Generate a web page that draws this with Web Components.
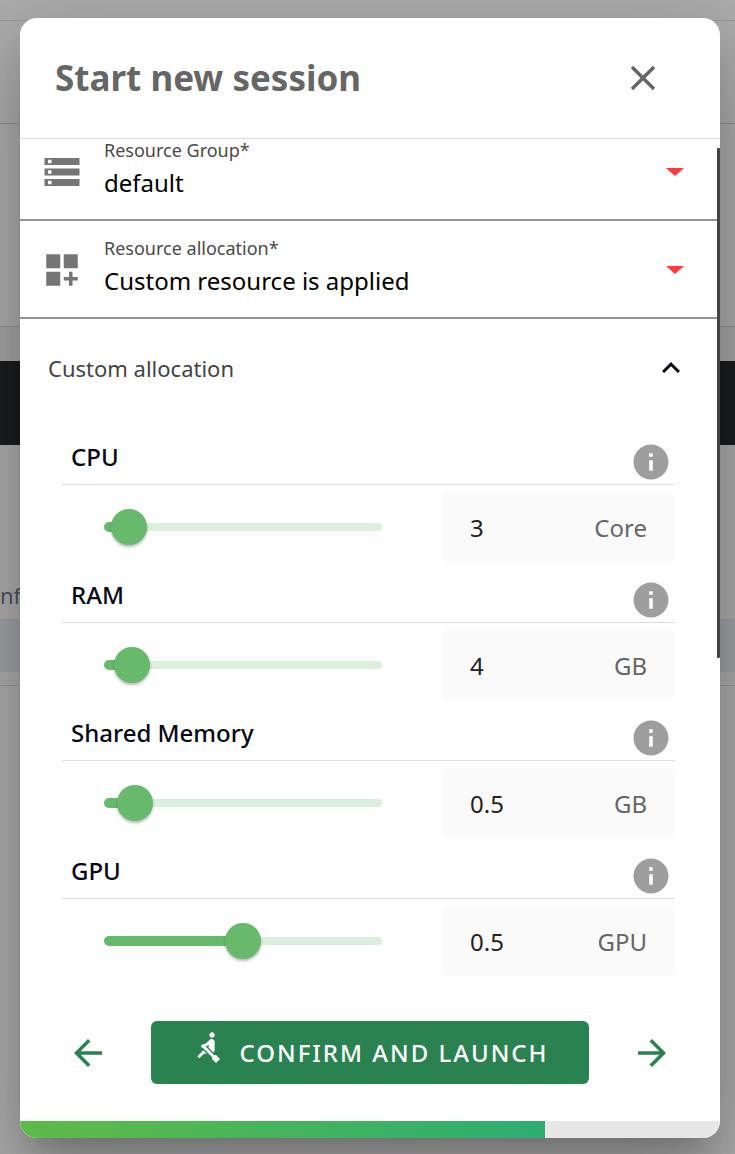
<!DOCTYPE html>
<html lang="en">
<head>
<meta charset="utf-8">
<meta name="viewport" content="width=device-width, initial-scale=1">
<title>Start new session</title>
<style>
  body { margin: 0; font-family: "Noto Sans", "Open Sans", sans-serif; background: #adadad; }
</style>
</head>
<body>
<session-page></session-page>

<script>
const define = (name, html, setup) => {
  const template = document.createElement('template');
  template.innerHTML = html;
  customElements.define(name, class extends HTMLElement {
    constructor() {
      super();
      this.attachShadow({ mode: 'open' }).append(template.content.cloneNode(true));
    }
    connectedCallback() { if (setup) setup(this, this.shadowRoot); }
  });
};

const icons = {
  close: '<path d="M19 6.41 17.59 5 12 10.59 6.41 5 5 6.41 10.59 12 5 17.59 6.41 19 12 13.41 17.59 19 19 17.59 13.41 12z"/>',
  storage: '<path d="M2 20h20v-4H2v4zm2-3h2v2H4v-2zM2 4v4h20V4H2zm4 3H4V5h2v2zm-4 7h20v-4H2v4zm2-3h2v2H4v-2z"/>',
  custom: '<path d="M3 3h8v8H3zM13 3h8v8h-8zM3 13h8v8H3zM18 13h-2v3h-3v2h3v3h2v-3h3v-2h-3z"/>',
  up: '<path d="M12 8l-6 6 1.41 1.41L12 10.83l4.59 4.58L18 14z"/>',
  info: '<path d="M12 2C6.48 2 2 6.48 2 12s4.48 10 10 10 10-4.48 10-10S17.52 2 12 2zm1 15h-2v-6h2v6zm0-8h-2V7h2v2z"/>',
  back: '<path d="M20 11H7.83l5.59-5.59L12 4l-8 8 8 8 1.41-1.41L7.83 13H20v-2z"/>',
  forward: '<path d="M12 4l-1.41 1.41L16.17 11H4v2h12.17l-5.58 5.59L12 20l8-8z"/>',
  rowing: '<path d="M8.5 14.5L4 19l1.5 1.5L9 17h2l-2.500-2.500zM15 1c-1.100 0-2 .9-2 2s.9 2 2 2 2-.9 2-2-.9-2-2-2zm6 20.010L18 24l-2.990-3.010V19.500l-7.100-7.090c-.31.050-.61.070-.91.070v-2.160c1.660.030 3.610-.870 4.670-2.040l1.400-1.550c.190-.210.430-.380.690-.5.290-.140.620-.23.960-.23h.030C15.990 6.010 17 7.020 17 8.260v5.750c0 .84-.35 1.610-.92 2.160l-3.580-3.580v-2.270c-.63.520-1.430 1.020-2.290 1.390L16.500 18H18l3 3.010z"/>'
};

define('ui-icon', `
  <style>
    :host { display: block; flex: none; width: 42px; height: 42px; }
    svg { display: block; width: 100%; height: 100%; fill: currentColor; }
  </style>
  <svg viewBox="0 0 24 24" aria-hidden="true"></svg>`,
  (el, root) => { root.querySelector('svg').innerHTML = icons[el.getAttribute('name')]; });

define('select-row', `
  <style>
    :host { display: block; border-bottom: 2px solid #939393; padding: 16px 0 14px; }
    :host([flush]) { padding-top: 0; }
    .field { display: grid; grid-template-columns: 84px 1fr 51px; grid-template-rows: 22px 44px; align-items: center; }
    .icon { grid-area: 1 / 1 / 3 / 2; margin-left: 21px; color: #757575; }
    label { grid-area: 1 / 2; font-size: 18px; line-height: 22px; color: #4a4a4a; }
    select { grid-area: 2 / 2 / 3 / 4; appearance: none; border: 0; padding: 0; margin: 0; width: 100%; height: 44px;
      background: none; font: 24px/44px "Noto Sans", sans-serif; color: #000; }
    .arrow { grid-area: 1 / 3 / 3 / 4; width: 18px; height: 8px; background: #ff3a3a; clip-path: polygon(0 0, 100% 0, 50% 100%); pointer-events: none; }
  </style>
  <div class="field">
    <div class="icon"></div>
    <label for="s"></label>
    <select id="s"><option></option></select>
    <span class="arrow"></span>
  </div>`,
  (el, root) => {
    const icon = document.createElement('ui-icon');
    icon.setAttribute('name', el.getAttribute('icon'));
    root.querySelector('.icon').replaceChildren(icon);
    root.querySelector('label').textContent = el.getAttribute('label');
    root.querySelector('option').textContent = el.getAttribute('value');
  });

define('resource-slider', `
  <style>
    :host { display: block; padding-bottom: 15px; }
    header { display: flex; justify-content: space-between; align-items: flex-start; height: 45px; padding: 0 6px 0 9px; border-bottom: 1px solid #dcdcdc; }
    h3 { margin: 0; font-size: 24px; line-height: 36px; font-weight: 500; color: #040716; }
    .info { border: 0; padding: 0; margin: 2px 0 0; width: 36px; background: none; color: #9e9e9e; display: flex; justify-content: center; }
    .body { display: grid; grid-template-columns: 1fr 233px; column-gap: 60px; padding: 7px 0 0 42px; align-items: center; }
    .slider { display: grid; align-items: center; }
    .track, .fill, input[type=range] { grid-area: 1 / 1; }
    .track { height: 8px; border-radius: 4px; background: #daefdc; }
    .fill { height: 10px; border-radius: 5px; background: #67ba6c; width: var(--at); }
    input[type=range] { appearance: none; margin: 0 -18px; height: 36px; background: none; }
    input[type=range]::-webkit-slider-thumb { appearance: none; width: 36px; height: 36px; border-radius: 50%; background: #67ba6c;
      box-shadow: 0 2px 3px rgba(0,0,0,.28); }
    .box { display: flex; align-items: center; height: 70px; padding: 0 28px; border-radius: 6px; background: #fafafa; box-sizing: border-box; font-size: 24px; color: #666; }
    .box input { flex: 1; min-width: 0; border: 0; padding: 0; background: none; font: inherit; color: #222; }
  </style>
  <header><h3></h3><button class="info" type="button"><ui-icon name="info"></ui-icon></button></header>
  <div class="body">
    <div class="slider"><div class="track"></div><div class="fill"></div><input type="range" min="0" max="100" step="any"></div>
    <label class="box"><input type="text"><span></span></label>
  </div>`,
  (el, root) => {
    const label = el.getAttribute('label');
    root.querySelector('h3').textContent = label;
    root.querySelector('.info').setAttribute('aria-label', 'About ' + label);
    const range = root.querySelector('input[type=range]');
    range.setAttribute('aria-label', label);
    range.value = el.getAttribute('at');
    const sync = () => el.style.setProperty('--at', range.value + '%');
    range.addEventListener('input', sync);
    sync();
    root.querySelector('.box input').value = el.getAttribute('value');
    root.querySelector('.box span').textContent = el.getAttribute('unit');
  });

define('expansion-panel', `
  <style>
    :host { display: block; }
    button { display: flex; align-items: center; justify-content: space-between; width: 100%; height: 98px; border: 0; margin: 0;
      padding: 0 31px 0 28px; background: none; font: inherit; font-size: 22px; color: #444; }
    ui-icon { width: 36px; height: 36px; color: #040716; }
    .content { padding: 22px 45px 0 42px; }
  </style>
  <button type="button" aria-expanded="true"><slot name="title"></slot><ui-icon name="up"></ui-icon></button>
  <div class="content"><slot></slot></div>`);

define('dialog-footer', `
  <style>
    :host { display: flex; align-items: center; justify-content: space-between; padding: 30px 47px 37px; color: #2a8251; }
    button { display: flex; align-items: center; justify-content: center; border: 0; padding: 0; margin: 0; background: none; color: inherit; }
    .launch { flex: 0 1 438px; height: 63px; border-radius: 6px; background: #2a8251; color: #fff; gap: 16px;
      font: 500 24px/32px "Noto Sans", sans-serif; letter-spacing: 2px; }
    .launch ui-icon { width: 32px; height: 32px; margin-bottom: 12px; }
  </style>
  <button type="button" aria-label="Previous"><ui-icon name="back"></ui-icon></button>
  <button type="button" class="launch"><ui-icon name="rowing"></ui-icon><span>CONFIRM AND LAUNCH</span></button>
  <button type="button" aria-label="Next"><ui-icon name="forward"></ui-icon></button>`);

define('session-dialog', `
  <style>
    :host { display: block; position: relative; background: #fff; border-radius: 17px;
      box-shadow: 0 22px 30px -14px rgba(0,0,0,.2), 0 48px 76px 6px rgba(0,0,0,.14), 0 18px 92px 16px rgba(0,0,0,.12); }
    header { display: flex; align-items: center; justify-content: space-between; height: 120px; padding: 0 56px 0 35px; border-bottom: 1px solid #dcdcdc; }
    h2 { margin: 0; font-size: 35px; line-height: 48px; color: #666; }
    .close { border: 0; padding: 0; background: none; color: #666; }
    .rows { margin-right: 3px; }
    .thumb { position: absolute; top: 130px; right: 0; width: 3px; height: 510px; background: #444; border-radius: 1px; }
    .progress { height: 17px; background: #e7e7e7; border-radius: 0 0 17px 17px; overflow: hidden; }
    .progress div { width: 75%; height: 100%; background: linear-gradient(90deg, #5fbb47, #2dad71); }
  </style>
  <header><h2>Start new session</h2><button type="button" class="close" aria-label="Close"><ui-icon name="close"></ui-icon></button></header>
  <div class="rows">
    <select-row flush icon="storage" label="Resource Group*" value="default"></select-row>
    <select-row icon="custom" label="Resource allocation*" value="Custom resource is applied"></select-row>
  </div>
  <expansion-panel>
    <span slot="title">Custom allocation</span>
    <resource-slider label="CPU" at="9" value="3" unit="Core"></resource-slider>
    <resource-slider label="RAM" at="10" value="4" unit="GB"></resource-slider>
    <resource-slider label="Shared Memory" at="11" value="0.5" unit="GB"></resource-slider>
    <resource-slider label="GPU" at="50" value="0.5" unit="GPU"></resource-slider>
  </expansion-panel>
  <dialog-footer></dialog-footer>
  <div class="progress" role="progressbar" aria-valuenow="75" aria-valuemin="0" aria-valuemax="100"><div></div></div>
  <div class="thumb"></div>`);

define('dimmed-page', `
  <style>
    :host { display: block; overflow: hidden; color: #4a525e; background: #adadad; }
    div { box-sizing: border-box; }
    .top { height: 21px; border-bottom: 1px solid #999; }
    .tabs { height: 103px; border-bottom: 1px solid #929292; }
    .card { height: 203px; border-bottom: 1px solid #959595; }
    .gap { height: 34px; background: #a6a6a6; }
    .bar { height: 84px; background: #1b1d1e; }
    .label { height: 174px; padding-top: 136px; font-size: 22px; line-height: 28px; }
    .head { height: 53px; background: #9fa2a7; }
    .row { height: 14px; border-bottom: 1px solid #989898; }
  </style>
  <div class="top"></div><div class="tabs"></div><div class="card"></div><div class="gap"></div>
  <div class="bar"></div><div class="label">nf</div><div class="head"></div><div class="row"></div>`);

define('session-page', `
  <style>
    :host { display: grid; min-height: 100vh; overflow: hidden; }
    dimmed-page, main { grid-area: 1 / 1; min-width: 0; }
    main { padding: 18px 15px 16px 20px; }
  </style>
  <dimmed-page></dimmed-page>
  <main><session-dialog></session-dialog></main>`);
</script>
</body>
</html>
